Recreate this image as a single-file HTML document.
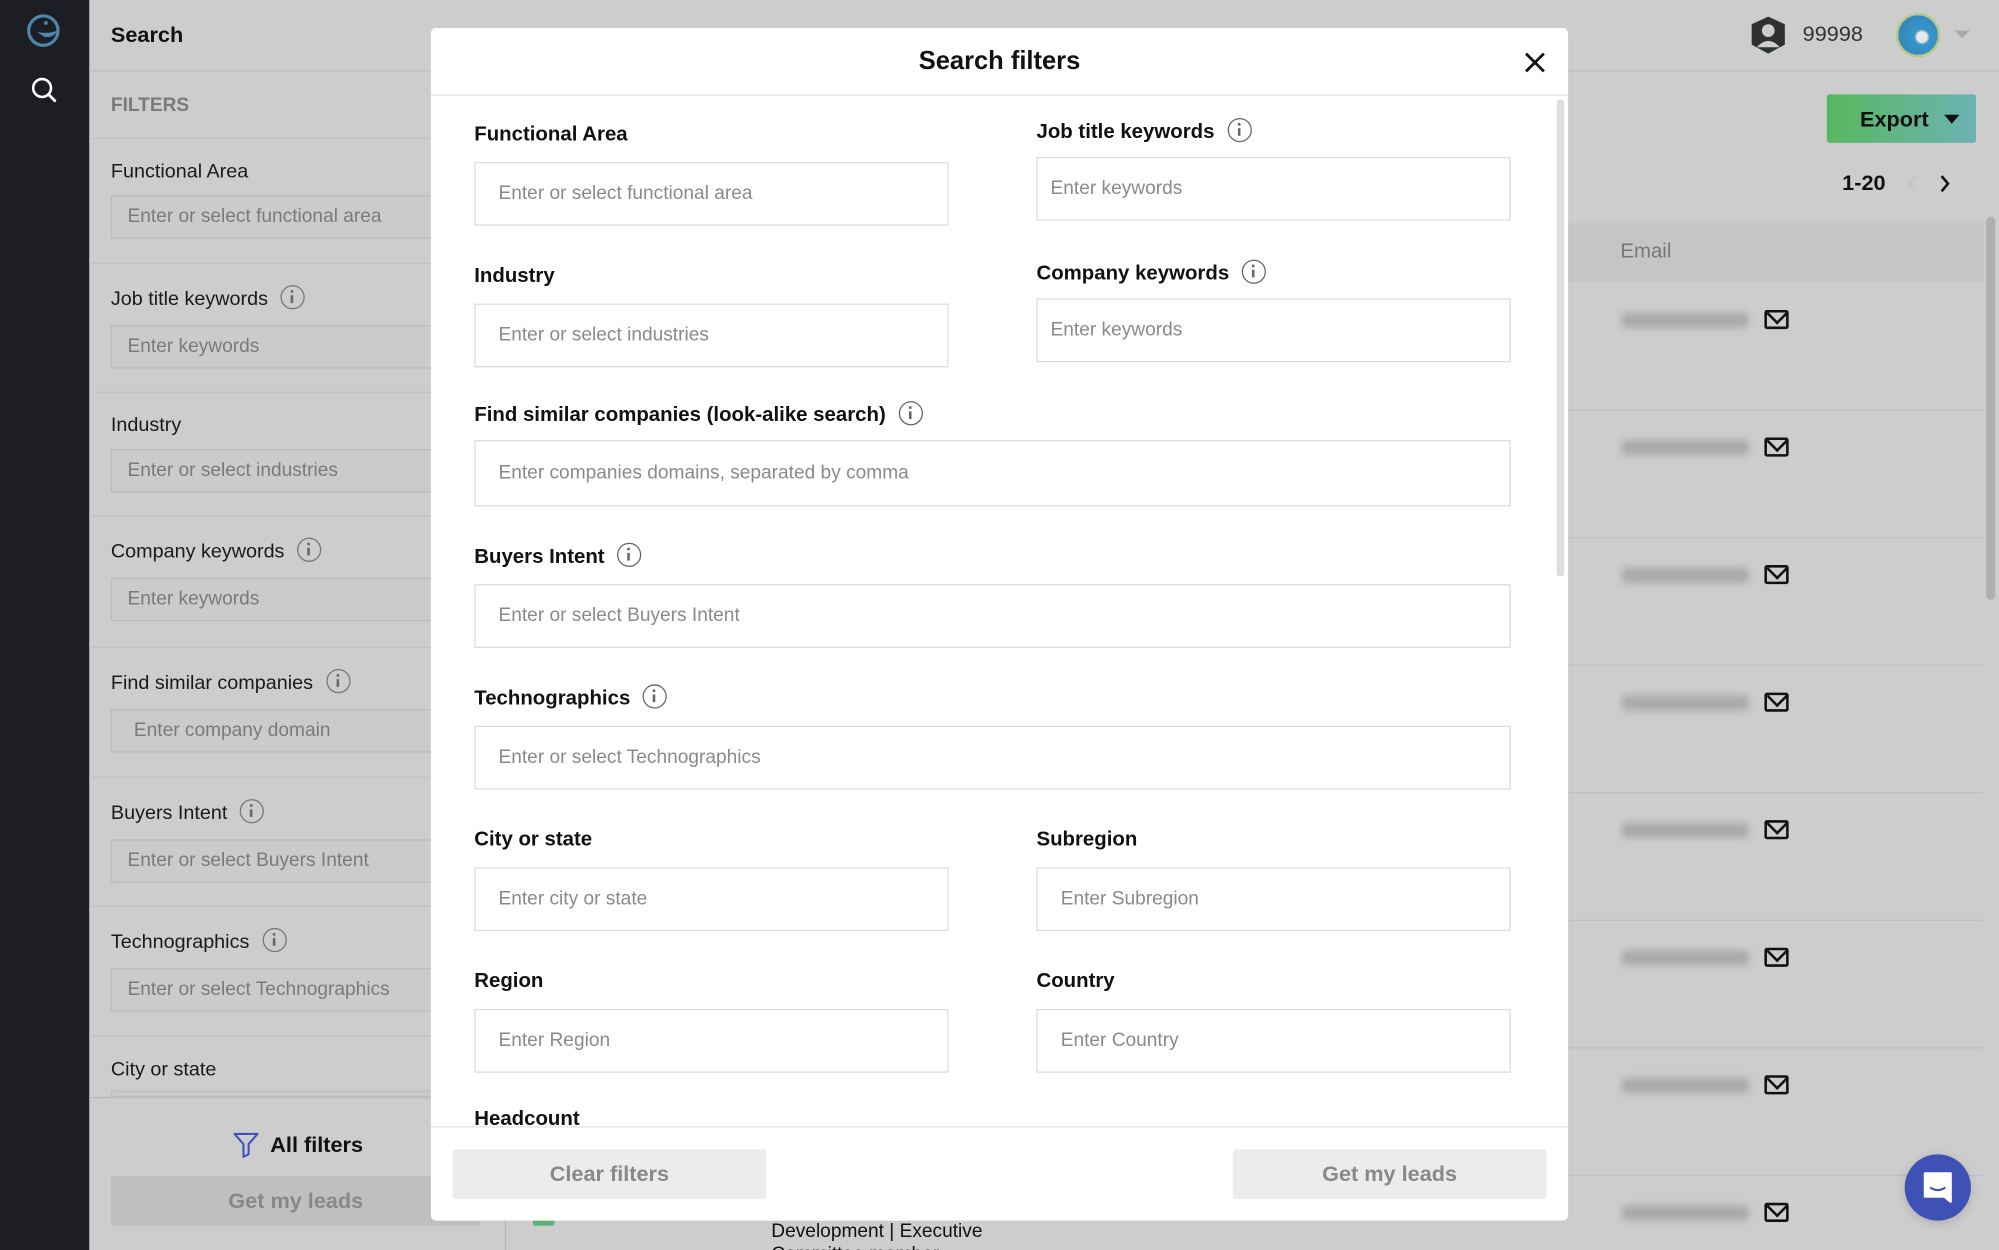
<!DOCTYPE html>
<html><head><meta charset="utf-8">
<style>
*{box-sizing:border-box;margin:0;padding:0}
html,body{width:1999px;height:1250px;overflow:hidden;background:#cdcdcd}
#w{position:absolute;left:0;top:0;width:1568px;height:980px;overflow:hidden;transform:scale(1.27487,1.27551);transform-origin:0 0;font-family:"Liberation Sans",sans-serif;background:#cdcdcd}
.a{position:absolute}
.lbl{position:absolute;font-size:16px;font-weight:bold;color:#111;white-space:nowrap;transform:translateY(-50%)}
.slbl{position:absolute;font-size:15.5px;color:#1a1a1a;white-space:nowrap;transform:translateY(-50%)}
.sin{position:absolute;left:87px;width:270px;height:34px;border:1px solid #bcbcbc;background:#cbcbcb;color:#7a7a7a;font-size:15px;padding-left:12px;line-height:32px;white-space:nowrap;overflow:hidden}
.hr{position:absolute;left:70px;width:326px;height:1px;background:#c2c2c2}
.in{position:absolute;height:50px;border:1px solid #dcdcdc;background:#fff;color:#8a8a8a;font-size:15px;padding-left:18px;line-height:48px;white-space:nowrap}
.info{display:inline-block;width:19px;height:19px;border:1.5px solid #666;border-radius:50%;vertical-align:middle;margin-left:10px;position:relative;top:-2px}
.info:before{content:"";position:absolute;left:7px;top:3px;width:2px;height:2px;background:#666}
.info:after{content:"";position:absolute;left:7px;top:7px;width:2px;height:6px;background:#666}
.sinfo{border-color:#777}
.em{position:absolute;left:1272px;width:100px;height:12px;background:#9a9a9a;filter:blur(3px);border-radius:4px;opacity:.7}
.env{position:absolute;left:1384px;width:19px;height:15px;border:2px solid #111;border-radius:2px}
.env:after{content:"";position:absolute;left:2px;top:-5px;width:10px;height:10px;border-right:2px solid #111;border-bottom:2px solid #111;transform:rotate(45deg)}
.rl{position:absolute;left:1230px;width:325px;height:1px;background:#c0c0c0}
.btn{position:absolute;height:39px;background:#ececec;color:#888;font-weight:bold;font-size:17px;text-align:center;line-height:39px;border-radius:2px}
</style></head><body><div id="w">
<div class="a" style="left:0;top:0;width:70px;height:1000px;background:#1c1e23"></div>
<svg class="a" style="left:20px;top:10px" width="30" height="28" viewBox="0 0 30 28"><circle cx="14" cy="14" r="11.5" fill="none" stroke="#4f86aa" stroke-width="2.5"/><path d="M9 15 q8 2 16-1 q-3 6-10 5" fill="#4f86aa"/><circle cx="16" cy="8" r="1.5" fill="#4f86aa"/></svg>
<svg class="a" style="left:23px;top:59px" width="24" height="24" viewBox="0 0 24 24"><circle cx="10" cy="10" r="7" fill="none" stroke="#fff" stroke-width="2"/><path d="M15 15l5 5" stroke="#fff" stroke-width="2.2" stroke-linecap="round"/></svg>
<div class="a" style="left:70px;top:55px;width:1498px;height:1px;background:#bdbdbd"></div>
<div class="a" style="left:87px;top:18px;font-weight:bold;font-size:17px;color:#111">Search</div>
<div class="a" style="left:87px;top:74px;font-weight:bold;font-size:15px;color:#7a7a7a">FILTERS</div>
<div class="hr" style="top:108px"></div>
<div class="slbl" style="left:87px;top:135px">Functional Area</div>
<div class="sin" style="top:153px">Enter or select functional area</div>
<div class="hr" style="top:206px"></div>
<div class="slbl" style="left:87px;top:235px">Job title keywords<span class="info sinfo"></span></div>
<div class="sin" style="top:255px">Enter keywords</div>
<div class="hr" style="top:307px"></div>
<div class="slbl" style="left:87px;top:334px">Industry</div>
<div class="sin" style="top:352px">Enter or select industries</div>
<div class="hr" style="top:404px"></div>
<div class="slbl" style="left:87px;top:433px">Company keywords<span class="info sinfo"></span></div>
<div class="sin" style="top:453px">Enter keywords</div>
<div class="hr" style="top:507px"></div>
<div class="slbl" style="left:87px;top:536px">Find similar companies<span class="info sinfo"></span></div>
<div class="sin" style="top:556px;padding-left:17px">Enter company domain</div>
<div class="hr" style="top:609px"></div>
<div class="slbl" style="left:87px;top:638px">Buyers Intent<span class="info sinfo"></span></div>
<div class="sin" style="top:658px">Enter or select Buyers Intent</div>
<div class="hr" style="top:710px"></div>
<div class="slbl" style="left:87px;top:739px">Technographics<span class="info sinfo"></span></div>
<div class="sin" style="top:759px">Enter or select Technographics</div>
<div class="hr" style="top:812px"></div>
<div class="slbl" style="left:87px;top:839px">City or state</div>
<div class="sin" style="top:855px;height:5px"></div>
<div class="hr" style="top:860px;background:#b8b8b8"></div>
<svg class="a" style="left:182px;top:886px" width="22" height="22" viewBox="0 0 22 22"><path d="M2 3h18l-7 8v8l-4 2v-10z" fill="none" stroke="#3f4fc0" stroke-width="1.6" stroke-linejoin="round"/></svg>
<div class="a" style="left:212px;top:888px;font-weight:bold;font-size:17px;color:#111">All filters</div>
<div class="a" style="left:87px;top:922px;width:290px;height:39px;background:#bfbfbf;color:#888;font-weight:bold;font-size:17px;text-align:center;line-height:39px">Get my leads</div>
<div class="a" style="left:396px;top:920px;width:1px;height:60px;background:#b5b5b5"></div>
<div class="a" style="left:418px;top:954px;width:17px;height:7px;background:#5cb178;border-radius:2px"></div>
<div class="a" style="left:605px;top:957px;font-size:15px;color:#111;line-height:18px">Development | Executive<br>Committee member</div>
<svg class="a" style="left:1371px;top:11px" width="33" height="33" viewBox="0 0 33 33"><path d="M16 2l13 6v16l-13 7-13-7V8z" fill="#2f3232"/><circle cx="16" cy="13" r="5" fill="#cdcdcd"/><path d="M7 26q9-10 18 0" fill="#cdcdcd"/></svg>
<div class="a" style="left:1414px;top:17px;font-size:17px;color:#333">99998</div>
<div class="a" style="left:1487px;top:10px;width:35px;height:35px;border-radius:50%;border:2px solid #b8c98a;background:radial-gradient(circle at 60% 55%,#e8e8e8 0 4px,#3a95c8 6px,#2c7fb5)"></div>
<div class="a" style="left:1533px;top:24px;width:0;height:0;border-left:6px solid transparent;border-right:6px solid transparent;border-top:6px solid #aaa"></div>
<div class="a" style="left:1433px;top:74px;width:117px;height:38px;background:linear-gradient(90deg,#58b85e,#6cb2b4);border-radius:2px"></div>
<div class="a" style="left:1459px;top:84px;font-weight:bold;font-size:17px;color:#111">Export</div>
<div class="a" style="left:1525px;top:90px;border-left:6px solid transparent;border-right:6px solid transparent;border-top:7px solid #111"></div>
<div class="a" style="left:1445px;top:134px;font-weight:bold;font-size:17px;color:#111">1-20</div>
<svg class="a" style="left:1493px;top:136px" width="40" height="16" viewBox="0 0 40 16"><path d="M10 2l-5 6 5 6" fill="none" stroke="#c4c4c4" stroke-width="1.5"/><path d="M30 2l5 6-5 6" fill="none" stroke="#111" stroke-width="2"/></svg>
<div class="a" style="left:1230px;top:175px;width:326px;height:46px;background:#c5c5c5"></div>
<div class="a" style="left:1271px;top:189px;font-size:16px;color:#777">Email</div>
<div class="a" style="left:1558px;top:170px;width:7px;height:300px;background:#b0b0b0;border-radius:3px"></div>
<div class="em" style="top:245px"></div><div class="env" style="top:243px"></div>
<div class="rl" style="top:321px"></div>
<div class="em" style="top:345px"></div><div class="env" style="top:343px"></div>
<div class="rl" style="top:421px"></div>
<div class="em" style="top:445px"></div><div class="env" style="top:443px"></div>
<div class="rl" style="top:521px"></div>
<div class="em" style="top:545px"></div><div class="env" style="top:543px"></div>
<div class="rl" style="top:621px"></div>
<div class="em" style="top:645px"></div><div class="env" style="top:643px"></div>
<div class="rl" style="top:721px"></div>
<div class="em" style="top:745px"></div><div class="env" style="top:743px"></div>
<div class="rl" style="top:821px"></div>
<div class="em" style="top:845px"></div><div class="env" style="top:843px"></div>
<div class="rl" style="top:921px"></div>
<div class="em" style="top:945px"></div><div class="env" style="top:943px"></div>
<div class="a" style="left:1494px;top:905px;width:52px;height:52px;border-radius:50%;background:#4051b5;box-shadow:0 2px 8px rgba(0,0,0,.15)"></div>
<svg class="a" style="left:1507px;top:918px" width="26" height="26" viewBox="0 0 26 26"><path d="M3 2h20v22l-5-4H3z" fill="#fff" stroke="#fff" stroke-linejoin="round" stroke-width="2"/><path d="M7 13q6 4 12 0" fill="none" stroke="#4051b5" stroke-width="1.6"/></svg>
<div class="a" style="left:338px;top:22px;width:892px;height:935px;background:#fff;border-radius:4px;overflow:hidden">
<div class="a" style="left:0;top:0;width:892px;height:52px;text-align:center;line-height:52px;font-weight:bold;font-size:20px;color:#111">Search filters</div>
<svg class="a" style="left:857px;top:18px" width="18" height="18" viewBox="0 0 18 18"><path d="M2 2l14 14M16 2L2 16" stroke="#111" stroke-width="2.2"/></svg>
<div class="a" style="left:0;top:52px;width:892px;height:1px;background:#e2e2e2"></div>
<div class="a" style="left:883px;top:56px;width:6px;height:374px;background:#dedede;border-radius:3px"></div>
<div class="a" style="left:0;top:861px;width:892px;height:1px;background:#e2e2e2"></div>
<div class="btn" style="left:17px;top:879px;width:246px">Clear filters</div>
<div class="btn" style="left:629px;top:879px;width:246px">Get my leads</div>
</div>
<div class="lbl" style="left:372px;top:106px">Functional Area</div>
<div class="in" style="left:372px;top:127px;width:372px">Enter or select functional area</div>
<div class="lbl" style="left:813px;top:104px">Job title keywords<span class="info"></span></div>
<div class="in" style="left:813px;top:123px;width:372px;padding-left:10px">Enter keywords</div>
<div class="lbl" style="left:372px;top:217px">Industry</div>
<div class="in" style="left:372px;top:238px;width:372px">Enter or select industries</div>
<div class="lbl" style="left:813px;top:215px">Company keywords<span class="info"></span></div>
<div class="in" style="left:813px;top:234px;width:372px;padding-left:10px">Enter keywords</div>
<div class="lbl" style="left:372px;top:326px">Find similar companies (look-alike search)<span class="info"></span></div>
<div class="in" style="left:372px;top:345px;width:813px;height:52px;line-height:50px">Enter companies domains, separated by comma</div>
<div class="lbl" style="left:372px;top:437px">Buyers Intent<span class="info"></span></div>
<div class="in" style="left:372px;top:458px;width:813px">Enter or select Buyers Intent</div>
<div class="lbl" style="left:372px;top:548px">Technographics<span class="info"></span></div>
<div class="in" style="left:372px;top:569px;width:813px">Enter or select Technographics</div>
<div class="lbl" style="left:372px;top:659px">City or state</div>
<div class="in" style="left:372px;top:680px;width:372px">Enter city or state</div>
<div class="lbl" style="left:813px;top:659px">Subregion</div>
<div class="in" style="left:813px;top:680px;width:372px">Enter Subregion</div>
<div class="lbl" style="left:372px;top:770px">Region</div>
<div class="in" style="left:372px;top:791px;width:372px">Enter Region</div>
<div class="lbl" style="left:813px;top:770px">Country</div>
<div class="in" style="left:813px;top:791px;width:372px">Enter Country</div>
<div class="a" style="left:372px;top:868px;height:15px;overflow:hidden;font-size:16px;font-weight:bold;color:#111;line-height:20px">Headcount</div>
</div></body></html>
